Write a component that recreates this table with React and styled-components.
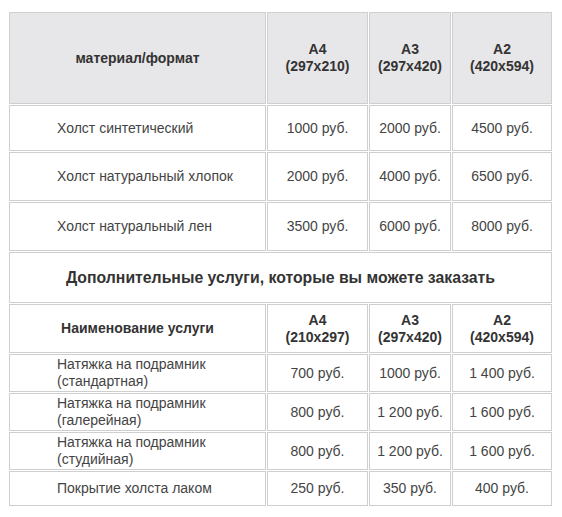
import styled, { createGlobalStyle } from "styled-components";

const GlobalStyle = createGlobalStyle`
  body {
    margin: 0;
    background: #fff;
    font-family: "Liberation Sans", Arial, sans-serif;
  }
`;

// row heights are the outer (border) heights measured from the screenshot
const materials = [
  { name: "Холст синтетический", prices: ["1000 руб.", "2000 руб.", "4500 руб."], height: 46 },
  { name: "Холст натуральный хлопок", prices: ["2000 руб.", "4000 руб.", "6500 руб."], height: 49 },
  { name: "Холст натуральный лен", prices: ["3500 руб.", "6000 руб.", "8000 руб."], height: 49 },
];

const services = [
  { name: ["Натяжка на подрамник", "(стандартная)"], prices: ["700 руб.", "1000 руб.", "1 400 руб."], height: 38 },
  { name: ["Натяжка на подрамник", "(галерейная)"], prices: ["800 руб.", "1 200 руб.", "1 600 руб."], height: 38 },
  { name: ["Натяжка на подрамник", "(студийная)"], prices: ["800 руб.", "1 200 руб.", "1 600 руб."], height: 38 },
  { name: ["Покрытие холста лаком"], prices: ["250 руб.", "350 руб.", "400 руб."], height: 35 },
];

const Page = styled.div`
  padding: 11px 0 0 8px;
`;

const Table = styled.table`
  border-collapse: separate;
  border-spacing: 1px;
  width: 544px;
  table-layout: fixed;
  font-size: 14px;
  color: #444;
`;

const Cell = styled.td`
  border: 1px solid #cfcfcf;
  padding: 0;
  height: ${(p) => p.$h - 2}px;
  text-align: ${(p) => (p.$left ? "left" : "center")};
  padding-left: ${(p) => (p.$left ? "47px" : "0")};
  vertical-align: middle;
  line-height: 17px;
`;

const HeadCell = styled(Cell).attrs({ as: "th" })`
  background: ${(p) => (p.$gray ? "#e7e6e8" : "#fff")};
  font-weight: bold;
  color: #333;
`;

const SectionCell = styled(Cell).attrs({ as: "th" })`
  font-weight: bold;
  font-size: 15.8px;
  color: #333;
`;

const App = () => {
  return (
    <Page>
      <GlobalStyle />
      <Table>
        <colgroup>
          <col style={{ width: 257 }} />
          <col style={{ width: 101 }} />
          <col style={{ width: 82 }} />
          <col style={{ width: 100 }} />
        </colgroup>
        <thead>
          <tr>
            <HeadCell $gray $h={92}>материал/формат</HeadCell>
            <HeadCell $gray $h={92}>А4<br />(297x210)</HeadCell>
            <HeadCell $gray $h={92}>А3<br />(297x420)</HeadCell>
            <HeadCell $gray $h={92}>А2<br />(420x594)</HeadCell>
          </tr>
        </thead>
        <tbody>
          {materials.map((m) => (
            <tr key={m.name}>
              <Cell $left $h={m.height}>{m.name}</Cell>
              {m.prices.map((p, i) => (
                <Cell key={i} $h={m.height}>{p}</Cell>
              ))}
            </tr>
          ))}
          <tr>
            <SectionCell colSpan={4} $h={51}>
              Дополнительные услуги, которые вы можете заказать
            </SectionCell>
          </tr>
          <tr>
            <HeadCell $h={49}>Наименование услуги</HeadCell>
            <HeadCell $h={49}>А4<br />(210x297)</HeadCell>
            <HeadCell $h={49}>А3<br />(297x420)</HeadCell>
            <HeadCell $h={49}>А2<br />(420x594)</HeadCell>
          </tr>
          {services.map((s, idx) => (
            <tr key={idx}>
              <Cell $left $h={s.height}>
                {s.name.map((line, j) => (
                  <span key={j}>
                    {j > 0 && <br />}
                    {line}
                  </span>
                ))}
              </Cell>
              {s.prices.map((p, i) => (
                <Cell key={i} $h={s.height}>{p}</Cell>
              ))}
            </tr>
          ))}
        </tbody>
      </Table>
    </Page>
  );
};

export default App;
